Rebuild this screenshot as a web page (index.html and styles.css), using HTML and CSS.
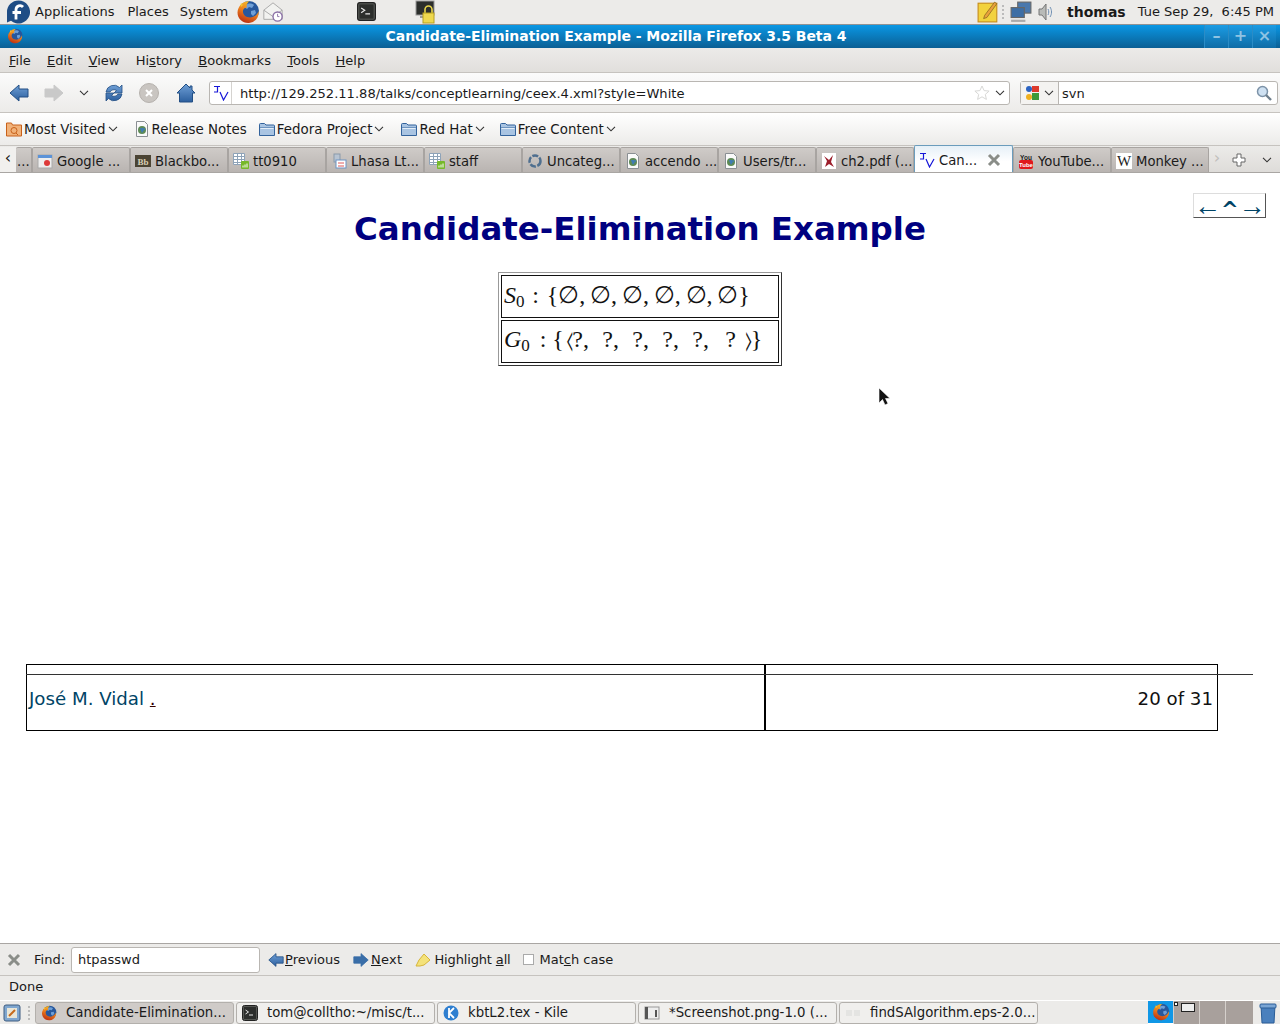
FILE: index.html
```html
<!DOCTYPE html>
<html lang="en">
<head>
<meta charset="utf-8">
<title>Candidate-Elimination Example</title>
<link rel="stylesheet" href="styles.css">
</head>
<body>
<svg class="defs" width="0" height="0">
  <defs>
    <linearGradient id="foxg" x1="0.7" y1="0" x2="0.3" y2="1">
      <stop offset="0" stop-color="#f7c52b"/>
      <stop offset=".5" stop-color="#ea7a1c"/>
      <stop offset="1" stop-color="#b92d12"/>
    </linearGradient>
    <linearGradient id="blueg" x1="0" y1="0" x2="0" y2="1">
      <stop offset="0" stop-color="#6f9fd6"/>
      <stop offset="1" stop-color="#2c5f9e"/>
    </linearGradient>
    <symbol id="fx" viewBox="0 0 24 24">
      <circle cx="13" cy="11" r="10" fill="#27579c"/>
      <path d="M10 5c2-2 6-2 8 0l-2 3-3-1-2 2-3-2zM15 11l4-1 1 3-3 3-2-2z" fill="#6f9fd6"/>
      <path d="M14 1.500C8 .5 2 5.500 1.500 12.500 1.500 19 7 23.500 13 23c6-.5 10.500-6 9.500-12-1 3.500-4.500 6.500-8.500 6.500-4.500 0-7.500-3-7-7 .5-2 2-3 4-3-1-2 0-4 2-6z" fill="url(#foxg)"/>
      <path d="M5 3c-.5 1.500-.5 3 0 4l2-2z" fill="#f7c52b"/>
    </symbol>
    <symbol id="page" viewBox="0 0 16 16">
      <path d="M2.500.500h8l3 3v12h-11z" fill="#fafafa" stroke="#8a8f93"/>
      <circle cx="8" cy="9" r="4" fill="#5d8a55"/>
      <path d="M6 7h3l1 2-2 3-1-2z" fill="#3f7cb5"/>
      <path d="M9 6.500l2 1v2l-1-1z" fill="#3f7cb5"/>
    </symbol>
    <symbol id="folder" viewBox="0 0 16 16">
      <path d="M.5 3.500a1 1 0 0 1 1-1h4l1.500 1.500h7.500a1 1 0 0 1 1 1v9.500H.5z" fill="#a9c4e2" stroke="#33639c"/>
      <path d="M1 6.500h14" stroke="#33639c" stroke-opacity=".5"/>
      <path d="M1.500 7.500h13" stroke="#e4eef8"/>
    </symbol>
    <symbol id="sheet" viewBox="0 0 16 16">
      <path d="M.5.500h11v11H.5zM.5 3.500h11M.5 6.500h11M.5 9.500h11M4.500.500v11M8.500.500v11" fill="#fff" stroke="#8ea3b8"/>
      <rect x="8" y="8" width="8" height="8" rx="1" fill="#76b82a"/>
      <path d="M10 14.500v-2M12 14.500v-3M14 14.500v-4" stroke="#fff"/>
    </symbol>
    <symbol id="tv" viewBox="0 0 16 16">
      <path d="M1 1.500h6M4.500 1.500V7H1M7 7l3.500 8L15 7" fill="none" stroke="#1616d8" stroke-width="1.200"/>
    </symbol>
    <symbol id="chev" viewBox="0 0 10 6">
      <path d="M1 .8 5 4.800 9 .8" fill="none" stroke="#333" stroke-width="1.100"/>
    </symbol>
    <symbol id="xmark" viewBox="0 0 14 14">
      <path d="M2 2l10 10M12 2 2 12" stroke="#8a8d88" stroke-width="3"/>
    </symbol>
    <symbol id="larrow" viewBox="0 0 20 20">
      <path d="M1 10 10 2v4h9v8h-9v4z" fill="url(#blueg)" stroke="#234f84"/>
    </symbol>
    <symbol id="rarrow" viewBox="0 0 20 20">
      <path d="M19 10 10 2v4H1v8h9v4z" fill="currentColor" stroke="currentColor"/>
    </symbol>
    <symbol id="term" viewBox="0 0 16 16">
      <rect x=".5" y=".5" width="15" height="15" rx="2" fill="#565854" stroke="#222"/>
      <rect x="2" y="2" width="12" height="12" fill="#2c2e2c"/>
      <path d="M3.500 5l3 2-3 2M7 10h4" fill="none" stroke="#e6e6e6"/>
    </symbol>
  </defs>
</svg>

<div class="screen">
  <header class="panel">
    <div class="panel-left">
      <svg class="fedora" viewBox="0 0 24 24"><path d="M12.500.5a11.500 11.500 0 1 1-7.500 20.200L1 22.500V12A11.500 11.500 0 0 1 12.500.5z" fill="#1f4d85"/><path d="M10 19.500V9.500a4 4 0 0 1 7-2.500M6.500 12.500H15" fill="none" stroke="#fff" stroke-width="2.800"/></svg>
      <span class="panel-item">Applications</span>
      <span class="panel-item panel-places">Places</span>
      <span class="panel-item panel-last">System</span>
      <svg class="panel-fx"><use href="#fx"/></svg>
      <svg class="panel-mail" viewBox="0 0 24 24"><path d="M2 10 12 2l10 8v10H2z" fill="#f2f2f0" stroke="#a5a5a5"/><path d="M2 10l10 7 10-7" fill="none" stroke="#a5a5a5"/><circle cx="17" cy="17" r="5" fill="#fff" stroke="#8a6fa5" stroke-width="1.500"/><path d="M17 14v3h2" fill="none" stroke="#8a6fa5"/></svg>
      <svg class="panel-term"><use href="#term"/></svg>
      <svg class="panel-lock" viewBox="0 0 20 24"><rect x="1" y="1" width="18" height="14" fill="#2c2e2c" stroke="#999"/><path d="M5 16h8v2H5z" fill="#999"/><path d="M10 13V9.500a3.500 3.500 0 0 1 7 0V13" fill="none" stroke="#e9d64a" stroke-width="1.600"/><rect x="8" y="13" width="11" height="10" fill="#eed84f" stroke="#b8a020"/></svg>
    </div>
    <div class="panel-right">
      <svg class="panel-note" viewBox="0 0 20 20"><rect x="1" y="2" width="17" height="17" fill="#f2d23e" stroke="#c58c1a"/><path d="M7 13 16 1l2 1.500L9 15l-3 1z" fill="#e9a13c" stroke="#7a5a1a" stroke-width=".6"/></svg>
      <span class="handle"></span>
      <svg class="panel-net" viewBox="0 0 20 20"><rect x="7" y="1" width="12" height="10" fill="#4a78ad" stroke="#666"/><rect x="1" y="6" width="12" height="9" fill="#3d6ea5" stroke="#666"/><path d="M1 18h13" stroke="#aaa" stroke-width="2"/></svg>
      <svg class="panel-vol" viewBox="0 0 16 20"><path d="M1 7h3l4-5v16l-4-5H1z" fill="#b9bbb8" stroke="#777"/><path d="M10 7c1 2 1 4 0 6M12 5c2 3 2 7 0 10" fill="none" stroke="#6f8fb4"/></svg>
      <strong class="user">thomas</strong>
      <span class="clock">Tue Sep 29,&nbsp; 6:45 PM</span>
    </div>
  </header>

  <div class="titlebar">
    <svg class="title-fx"><use href="#fx"/></svg>
    <span class="title-text">Candidate-Elimination Example - Mozilla Firefox 3.5 Beta 4</span>
    <div class="wm">
      <span class="wm-btn">–</span><span class="wm-btn">+</span><span class="wm-btn">×</span>
    </div>
  </div>

  <nav class="menubar">
    <span><u>F</u>ile</span><span><u>E</u>dit</span><span><u>V</u>iew</span><span>Hi<u>s</u>tory</span><span><u>B</u>ookmarks</span><span><u>T</u>ools</span><span><u>H</u>elp</span>
  </nav>

  <div class="navbar">
    <svg class="nav-ico back"><use href="#larrow"/></svg>
    <svg class="nav-ico fwd"><use href="#rarrow"/></svg>
    <svg class="nav-chev"><use href="#chev"/></svg>
    <svg class="nav-ico reload" viewBox="0 0 20 20"><path d="M2 9a8 8 0 0 1 13.500-4.500L18 2v8h-8l2.500-2.500A4.500 4.500 0 0 0 6 9zM18 11a8 8 0 0 1-13.500 4.500L2 18v-8h8l-2.500 2.500A4.500 4.500 0 0 0 14 11z" fill="url(#blueg)" stroke="#234f84" stroke-width=".8"/></svg>
    <svg class="nav-ico stop" viewBox="0 0 20 20"><circle cx="10" cy="10" r="9.500" fill="#c9c5c1" stroke="#b5b1ad"/><path d="M7 7l6 6M13 7l-6 6" stroke="#fff" stroke-width="2"/></svg>
    <svg class="nav-ico home" viewBox="0 0 20 20"><path d="M10 1 1 10h2.500v9h13v-9H19l-3-3V3h-2v2z" fill="url(#blueg)" stroke="#234f84"/></svg>
    <div class="urlbar">
      <span class="url-ico"><svg class="ico16"><use href="#tv"/></svg></span>
      <span class="url-text">http://129.252.11.88/talks/conceptlearning/ceex.4.xml?style=White</span>
      <svg class="star" viewBox="0 0 16 16"><path d="M8 1l2.100 4.600 5 .5-3.800 3.300 1.100 5L8 11.800 3.600 14.400l1.100-5L.9 6.100l5-.5z" fill="#fff" stroke="#d8d8d6"/></svg>
      <svg class="url-chev"><use href="#chev"/></svg>
    </div>
    <div class="searchbar">
      <span class="engine">
        <svg class="ico16" viewBox="0 0 16 16"><circle cx="5" cy="4" r="3" fill="#2b63c2"/><rect x="8" y="1" width="7" height="6" fill="#dd3a2c"/><rect x="8" y="8" width="7" height="7" fill="#3d9a3a"/><circle cx="5" cy="12" r="3" fill="#f0b020"/></svg>
        <svg class="url-chev"><use href="#chev"/></svg>
      </span>
      <span class="search-text">svn</span>
      <svg class="glass" viewBox="0 0 16 16"><circle cx="6.500" cy="6.500" r="5" fill="#cfe1f2" stroke="#7d93a8" stroke-width="1.500"/><path d="M10 10l5 5" stroke="#6f7f8d" stroke-width="2.400"/></svg>
    </div>
  </div>

  <div class="bookmarks">
    <span class="bm bm-mv"><svg class="ico16" viewBox="0 0 16 16"><path d="M.5 2h5l1 2h9v11H.5z" fill="#f1b27a" stroke="#c8611a"/><circle cx="8" cy="9.500" r="3" fill="none" stroke="#c8611a"/><path d="M10 12l2 2" stroke="#c8611a"/></svg>Most Visited<svg class="bm-chev"><use href="#chev"/></svg></span>
    <span class="bm bm-rn"><svg class="ico16"><use href="#page"/></svg>Release Notes</span>
    <span class="bm bm-fp"><svg class="ico16"><use href="#folder"/></svg>Fedora Project<svg class="bm-chev"><use href="#chev"/></svg></span>
    <span class="bm bm-rh"><svg class="ico16"><use href="#folder"/></svg>Red Hat<svg class="bm-chev"><use href="#chev"/></svg></span>
    <span class="bm"><svg class="ico16"><use href="#folder"/></svg>Free Content<svg class="bm-chev"><use href="#chev"/></svg></span>
  </div>

  <div class="tabbar">
    <span class="tab-scroll">‹</span>
    <span class="tab tab-stub">...</span>
    <span class="tab"><svg class="ico16" viewBox="0 0 16 16"><rect x="1" y="2" width="14" height="13" fill="#eee" stroke="#aaa"/><rect x="1" y="2" width="14" height="3" fill="#5c93d8"/><circle cx="10" cy="10" r="3" fill="#dd3a3a"/></svg>Google ...</span>
    <span class="tab"><svg class="ico16" viewBox="0 0 16 16"><rect x="0" y="2" width="16" height="12" fill="#4b4434"/><text x="8" y="11.500" class="fav-bb">Bb</text></svg>Blackbo...</span>
    <span class="tab"><svg class="ico16"><use href="#sheet"/></svg>tt0910</span>
    <span class="tab"><svg class="ico16" viewBox="0 0 16 16"><rect x="3" y="1" width="6" height="8" fill="#b8c4d2" stroke="#8a99aa"/><rect x="5" y="7" width="10" height="8" fill="#fff" stroke="#6d93c4"/><path d="M7 10h6M7 13h6" stroke="#dd5a5a"/></svg>Lhasa Lt...</span>
    <span class="tab"><svg class="ico16"><use href="#sheet"/></svg>staff</span>
    <span class="tab"><svg class="ico16" viewBox="0 0 16 16"><circle cx="8" cy="8" r="5.500" fill="none" stroke="#4f6f8f" stroke-width="2.500" stroke-dasharray="6 1.500"/></svg>Uncateg...</span>
    <span class="tab"><svg class="ico16"><use href="#page"/></svg>accendo ...</span>
    <span class="tab"><svg class="ico16"><use href="#page"/></svg>Users/tr...</span>
    <span class="tab"><svg class="ico16" viewBox="0 0 16 16"><rect x="1" y="0" width="14" height="16" fill="#fff"/><path d="M3 3l5 4 4-5-2 7 3 5-5-3-4 3 2-6z" fill="#9d1f2c"/></svg>ch2.pdf (...</span>
    <span class="tab tab-active"><svg class="ico16"><use href="#tv"/></svg><span class="tab-label">Can...</span><svg class="tab-x"><use href="#xmark"/></svg></span>
    <span class="tab"><svg class="ico16" viewBox="0 0 16 16"><rect x="1" y="7" width="14" height="9" rx="2" fill="#e0171c"/><text x="8" y="6.500" class="fav-yt">You</text><text x="8" y="14" class="fav-tube">Tube</text></svg>YouTube...</span>
    <span class="tab"><svg class="ico16" viewBox="0 0 16 16"><rect width="16" height="16" fill="#fff"/><text x="8" y="13" class="fav-w">W</text></svg>Monkey ...</span>
    <span class="tab-more">›</span>
    <svg class="tab-new" viewBox="0 0 14 14"><path d="M5 1h4v4h4v4H9v4H5V9H1V5h4z" fill="#fff" stroke="#666"/></svg>
    <svg class="tab-list"><use href="#chev"/></svg>
  </div>

  <main class="content">
    <div class="slidenav"><span class="sn-arrow">←</span><span class="up">^</span><span class="sn-arrow">→</span></div>
    <h1>Candidate-Elimination Example</h1>
    <table class="hyp">
      <tr><td class="row-s"><i>S</i><sub>0</sub> <span class="colon">:</span> {∅, ∅, ∅, ∅, ∅, ∅}</td></tr>
      <tr><td class="row-g"><i>G</i><sub>0</sub> <span class="colon colon-g">:</span> {<span class="ang ang-l">‹</span><span class="q">?,</span><span class="q">?,</span><span class="q">?,</span><span class="q">?,</span><span class="q">?,</span><span class="q">?</span><span class="ang ang-r">›</span>}</td></tr>
    </table>
    <div class="foot">
      <div class="foot-top"><span class="foot-top-l"></span><span class="foot-rule"></span></div>
      <div class="foot-row">
        <div class="foot-l"><a class="author">José M. Vidal</a> <a class="dot">.</a></div>
        <div class="foot-r">20 of 31</div>
      </div>
    </div>
    <svg class="cursor" viewBox="0 0 12 20"><path d="M1 1v15l3.500-3.500L7 18l3-1.500L7.500 11.500H12z" fill="#111" stroke="#fff" stroke-width=".6"/></svg>
  </main>

  <div class="findbar">
    <svg class="find-x"><use href="#xmark"/></svg>
    <span class="find-label">Find:</span>
    <span class="find-input">htpasswd</span>
    <span class="find-btn find-prev"><svg class="ico16"><use href="#larrow"/></svg><span><u>P</u>revious</span></span>
    <span class="find-btn find-next"><svg class="ico16 next"><use href="#rarrow"/></svg><span><u>N</u>ext</span></span>
    <span class="find-btn find-hl"><svg class="ico16" viewBox="0 0 16 16"><path d="M1 14l3-6 5-6 6 6-6 5-4 1z" fill="#f4e27a" stroke="#d6b53a"/></svg><span>Highlight <u>a</u>ll</span></span>
    <span class="check"></span><span>Mat<u>c</u>h case</span>
  </div>

  <div class="status">Done</div>

  <footer class="taskbar">
    <svg class="desk" viewBox="0 0 18 20"><rect x="1" y="2" width="16" height="16" rx="2" fill="#7fa6cf" stroke="#3f5d80"/><rect x="4" y="5" width="10" height="10" fill="#e8e6d8"/><path d="M6 13l6-6" stroke="#c66a1a" stroke-width="2"/></svg>
    <span class="handle"></span>
    <span class="task task-on"><svg class="ico16"><use href="#fx"/></svg>Candidate-Elimination...</span>
    <span class="task"><svg class="ico16"><use href="#term"/></svg>tom@colltho:~/misc/t...</span>
    <span class="task"><svg class="ico16" viewBox="0 0 16 16"><circle cx="8" cy="8" r="7.500" fill="#2f7fd0"/><path d="M6 3v10M11 3 6 8l5 5" fill="none" stroke="#fff" stroke-width="1.800"/></svg>kbtL2.tex - Kile</span>
    <span class="task"><svg class="ico16" viewBox="0 0 16 16"><rect x="1" y="2" width="14" height="12" fill="#eee" stroke="#999"/><rect x="1" y="2" width="3" height="12" fill="#555"/><rect x="11" y="5" width="2" height="7" fill="#555"/></svg>*Screenshot.png-1.0 (...</span>
    <span class="task"><svg class="ico16" viewBox="0 0 16 16"><path d="M1 5h6v6H1zM9 5h6v6H9z" fill="#e4e4e2"/></svg>findSAlgorithm.eps-2.0...</span>
    <div class="pager">
      <span class="ws ws-on"><svg class="ico18"><use href="#fx"/></svg></span>
      <span class="ws ws-mini"><i class="mini-a"></i><i class="mini-b"></i></span>
      <span class="ws"></span>
      <span class="ws"></span>
    </div>
    <svg class="trash" viewBox="0 0 18 22"><path d="M2 3h14l-1 18H3z" fill="#4a80bd" stroke="#2b5d97"/><rect x="1" y="2" width="16" height="4" rx="1" fill="#7aa5d4" stroke="#2b5d97"/></svg>
  </footer>
</div>
</body>
</html>
```

FILE: styles.css
```css
* { box-sizing: border-box; }
html, body { margin: 0; padding: 0; }
body { font-family: "DejaVu Sans", sans-serif; font-size: 13px; color: #1a1a1a; background: #fff; }
.defs { position: absolute; }
.screen { width: 1280px; height: 1024px; display: flex; flex-direction: column; overflow: hidden; }
svg { display: block; flex: none; }
.ico16 { width: 16px; height: 16px; }
.ico18 { width: 18px; height: 18px; }
.fav-bb { font-family: "Liberation Serif", serif; font-size: 9px; font-weight: bold; fill: #d9cfb4; text-anchor: middle; }
.fav-yt { font-family: "Liberation Sans", sans-serif; font-size: 6.500px; font-weight: bold; fill: #222; text-anchor: middle; }
.fav-tube { font-family: "Liberation Sans", sans-serif; font-size: 6px; font-weight: bold; fill: #fff; text-anchor: middle; }
.fav-w { font-family: "Liberation Serif", serif; font-size: 15px; fill: #222; text-anchor: middle; }

.panel { height: 25px; background: #ecebe9; border-bottom: 1px solid #8f9294; display: flex; justify-content: space-between; align-items: center; padding-bottom: 1px; }
.panel-left, .panel-right { display: flex; align-items: center; }
.fedora { width: 24px; height: 24px; margin-left: 6px; margin-right: 5px; }
.panel-item { margin-right: 13px; }
.panel-places { margin-right: 11px; }
.panel-last { margin-right: 8px; }
.panel-fx { width: 24px; height: 24px; }
.panel-mail { width: 22px; height: 22px; margin-left: 2px; }
.panel-term { width: 19px; height: 19px; margin-left: 73px; }
.panel-lock { width: 20px; height: 24px; margin-left: 39px; }
.panel-note { width: 22px; height: 22px; }
.handle { width: 2px; height: 14px; margin: 0 7px 0 3px; border-left: 2px dotted #bbb; }
.panel-net { width: 22px; height: 22px; margin-left: -1px; }
.panel-vol { width: 18px; height: 20px; margin-left: 5px; }
.user { margin-left: 12px; font-size: 14px; }
.clock { margin-left: 12px; margin-right: 6px; }

.titlebar { height: 23px; background: linear-gradient(#0a97e4, #0b5f94); display: flex; align-items: center; color: #fff; padding-bottom: 1px; }
.title-fx { width: 16px; height: 16px; margin-left: 7px; }
.title-text { flex: 1; text-align: center; font-weight: bold; font-size: 14px; letter-spacing: -.05px; padding-left: 5px; }
.wm { display: flex; height: 23px; margin-right: 4px; margin-bottom: -1px; }
.wm-btn { width: 24px; height: 23px; text-align: center; font-weight: bold; font-size: 16px; line-height: 22px; color: #8fc3e3; border-left: 1px solid #2b8cc6; background: linear-gradient(#1b9ce4, #0f6ca6); }

.menubar { height: 25px; background: linear-gradient(#ecebe9, #e1dfdc); border-bottom: 1px solid #c6c3bf; display: flex; align-items: center; padding-left: 9px; gap: 16.300px; }

.navbar { height: 40px; background: linear-gradient(#fbfbfb, #ecebe9); border-bottom: 1px solid #c6c3bf; display: flex; align-items: center; padding-top: 1px; }
.nav-ico { width: 20px; height: 20px; }
.back { margin-left: 9px; }
.fwd { margin-left: 15px; color: #c9c9c9; }
.nav-chev { width: 10px; height: 6px; margin-left: 15px; }
.url-chev, .bm-chev { width: 10px; height: 6px; }
.tab-list { width: 10px; height: 6px; }
.reload { margin-left: 15px; }
.stop { margin-left: 15px; }
.home { margin-left: 17px; }
.urlbar { width: 801px; height: 24px; margin-left: 13px; background: #fff; border: 1px solid #b9b6b2; border-radius: 3px; display: flex; align-items: center; }
.url-ico { width: 22px; height: 22px; border-right: 1px solid #d5d3d0; display: flex; align-items: center; justify-content: center; }
.url-text { flex: 1; padding-left: 8px; font-size: 13.080px; }
.star { width: 16px; height: 16px; }
.urlbar .url-chev { margin: 0 4px 0 5px; }
.searchbar { width: 258px; height: 24px; margin-left: 10px; background: #fff; border: 1px solid #b9b6b2; border-radius: 3px; display: flex; align-items: center; }
.engine { width: 38px; height: 22px; padding-left: 3px; border-right: 1px solid #b9b6b2; display: flex; align-items: center; gap: 4px; background: #f4f3f1; }
.search-text { flex: 1; padding-left: 3px; }
.glass { width: 16px; height: 16px; margin-right: 5px; }

.bookmarks { height: 33px; background: linear-gradient(#fff, #ecebe9); border-bottom: 1px solid #c6c3bf; display: flex; align-items: center; padding-left: 6px; font-size: 13.400px; }
.bm { display: flex; align-items: center; gap: 2px; }
.bm-mv { margin-right: 16px; }
.bm-rn { margin-right: 12px; }
.bm-fp { margin-right: 17px; }
.bm-rh { margin-right: 15px; }

.tabbar { height: 27px; background: linear-gradient(#ecebe9, #dedcd9); border-bottom: 1px solid #a9a6a3; display: flex; align-items: flex-end; font-size: 13.200px; }
.tab-scroll { width: 16px; height: 25px; flex: none; text-align: center; background: #f1f0ee; font-size: 16px; line-height: 22px; }
.tab { width: 98px; height: 25px; flex: none; background: linear-gradient(#cfcbc8, #b9b4b1); border: 1px solid #a8a4a1; border-bottom: 0; border-radius: 2px 2px 0 0; display: flex; align-items: center; gap: 4px; padding-left: 4px; padding-top: 2px; white-space: nowrap; overflow: hidden; }
.tab-stub { width: 16px; padding-left: 1px; border-left: 0; }
.tab-active { width: 99px; height: 27px; background: linear-gradient(#e6f0f7, #fff 60%); border-color: #6b9cbc; padding-left: 4px; }
.tab-label { flex: 1; }
.tab-x { width: 14px; height: 14px; margin-right: 11px; }
.tab-more { width: 16px; height: 25px; flex: none; color: #c0bebb; text-align: center; font-size: 16px; line-height: 22px; }
.tab-new { width: 14px; height: 14px; margin: 0 0 5px 7px; }
.tab-list { margin: 0 8px 9px 16px; }

.content { height: 770px; background: #fff; position: relative; padding-top: 1px; }
.slidenav { position: absolute; top: 20px; right: 14px; width: 73px; height: 25px; border: 1px solid; border-color: #ddd #555 #555 #ddd; display: flex; justify-content: space-between; align-items: center; padding: 3px 0 0; color: #004466; line-height: 22px; }
.sn-arrow { font-family: "Liberation Serif", serif; font-size: 27px; margin-top: -3px; }
.up { font-weight: bold; font-size: 21px; margin-top: 6px; }
h1 { margin: 35px 0 0; height: 40px; font-size: 32.450px; line-height: 40px; font-weight: bold; color: #000080; text-align: center; }
.hyp { margin: 23px auto 0; width: 284px; table-layout: fixed; border: 1px solid #999; border-bottom-color: #333; border-right-color: #333; border-spacing: 2px; border-collapse: separate; font-family: "Liberation Serif", serif; font-size: 24px; color: #111; }
.hyp td { border: 1px solid #111; height: 43px; padding: 0 5px 0 2px; white-space: nowrap; line-height: 30px; word-spacing: -1.200px; }
.hyp .row-s { padding-bottom: 3px; }
.hyp .row-g { padding-bottom: 4px; }
.hyp sub { font-size: 17px; line-height: 0; vertical-align: -4px; }
.colon { margin: 0 3px; }
.colon-g { margin: 0 1px 0 5px; }
.q { display: inline-block; width: 30px; text-align: center; }
.ang { display: inline-block; font-family: "DejaVu Sans", sans-serif; font-weight: 200; font-size: 20px; transform: translateY(-1px) scale(1.1, 2.4); }
.ang-l { margin: 0 -8px 0 2px; }
.ang-r { margin: 0 -2px 0 -1px; }
.foot { margin: 298px 0 0 26px; width: 1192px; }
.foot-top { height: 11px; border: 1px solid #000; border-bottom: 0; position: relative; }
.foot-top-l { display: block; width: 739px; height: 10px; border-right: 2px solid #000; }
.foot-rule { position: absolute; left: -1px; top: 9px; width: 1227px; height: 1px; background: #333; }
.foot-row { display: flex; height: 56px; border: 1px solid #000; border-top: 0; font-size: 18.200px; }
.foot-l { width: 739px; border-right: 2px solid #000; padding: 13px 2px; color: #004466; }
.foot-r { flex: 1; text-align: right; padding: 13px 4px; color: #111; }
.dot { text-decoration: underline; color: #300; }
.cursor { position: absolute; left: 878px; top: 214px; width: 12px; height: 20px; }

.findbar { height: 33px; background: #ecebe9; border-top: 1px solid #a9a6a3; border-bottom: 1px solid #c6c3bf; display: flex; align-items: center; padding-left: 7px; }
.find-x { width: 14px; height: 14px; }
.find-label { margin-left: 13px; }
.find-input { width: 189px; height: 26px; margin-left: 6px; background: #fff; border: 1px solid #b9b6b2; border-radius: 3px; padding: 3px 6px; line-height: 18px; }
.find-btn { display: flex; align-items: center; }
.find-prev { margin-left: 8px; gap: 1px; }
.find-next { margin-left: 13px; gap: 2px; letter-spacing: .3px; }
.find-hl { margin-left: 13px; gap: 3px; letter-spacing: -.15px; }
.next { color: #3a6ea8; }
.check { width: 11px; height: 11px; margin: 0 6px 0 12px; background: #fff; border: 1px solid #aaa; }

.status { height: 24px; background: #ecebe9; padding: 1px 9px 0; line-height: 20px; }

.taskbar { height: 24px; background: #ecebe9; border-top: 1px solid #fff; display: flex; align-items: center; font-size: 13.300px; }
.desk { width: 20px; height: 20px; margin-left: 2px; }
.taskbar .handle { margin: 0 5px 0 6px; }
.task { width: 199px; height: 22px; margin-right: 2px; background: #f0efed; border: 1px solid #b3b0ac; border-radius: 3px; display: flex; align-items: center; gap: 9px; padding-left: 5px; white-space: nowrap; overflow: hidden; }
.task-on { background: #cfcbc8; }
.pager { margin-left: 108px; display: flex; height: 23px; background: #a8a09c; }
.ws { width: 26px; height: 23px; border-right: 1px solid #d5d0cc; position: relative; }
.ws:last-child { border: 0; width: 27px; }
.ws-on { background: #1097e6; display: flex; align-items: center; justify-content: center; border-bottom: 1px solid #fff; }
.mini-a { position: absolute; left: 1px; top: 2px; width: 2px; height: 2px; background: #fff; outline: 1px solid #222; }
.mini-b { position: absolute; left: 7px; top: 2px; width: 14px; height: 9px; background: #eee; border: 1px solid #222; }
.trash { width: 20px; height: 22px; margin-left: 5px; }
```
